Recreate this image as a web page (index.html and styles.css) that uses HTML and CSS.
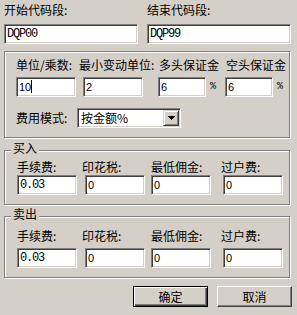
FILE: index.html
```html
<!DOCTYPE html>
<html lang="zh-CN">
<head>
<meta charset="utf-8">
<title>费用设置</title>
<link rel="stylesheet" href="styles.css">
</head>
<body>
<div class="dlg">
  <div class="top">
    <div class="fld f1">
      <div class="lbl">开始代码段:</div>
      <div class="edit mono">DQP00</div>
    </div>
    <div class="fld f2">
      <div class="lbl">结束代码段:</div>
      <div class="edit mono">DQP99</div>
    </div>
  </div>

  <div class="grp g1">
    <div class="lrow">
      <span>单位/乘数:</span><span>最小变动单位:</span><span>多头保证金</span><span>空头保证金</span>
    </div>
    <div class="irow">
      <div class="edit sans w60">10<span class="caret"></span></div>
      <div class="edit sans w60 m7">2</div>
      <div class="edit sans w48 m15">6</div><span class="pct">%</span>
      <div class="edit sans w48">6</div><span class="pct">%</span>
    </div>
    <div class="srow">
      <span class="slbl">费用模式:</span>
      <div class="combo">
        <span class="ctext">按金额%</span>
        <span class="cbtn"><svg width="7" height="4" viewBox="0 0 7 4" shape-rendering="crispEdges"><path d="M0 0h7v1h-1v1h-1v1h-1v1h-1v-1h-1v-1h-1v-1h-1z" fill="#000"/></svg></span>
      </div>
    </div>
  </div>

  <div class="grp g2">
    <div class="legend">买入</div>
    <div class="lrow">
      <span>手续费:</span><span>印花税:</span><span>最低佣金:</span><span>过户费:</span>
    </div>
    <div class="irow">
      <div class="edit mono w60">0.03</div>
      <div class="edit sans w60 m8">0</div>
      <div class="edit sans w60 m6">0</div>
      <div class="edit sans w60 m12">0</div>
    </div>
  </div>

  <div class="grp g3">
    <div class="legend">卖出</div>
    <div class="lrow">
      <span>手续费:</span><span>印花税:</span><span>最低佣金:</span><span>过户费:</span>
    </div>
    <div class="irow">
      <div class="edit mono w60">0.03</div>
      <div class="edit sans w60 m8">0</div>
      <div class="edit sans w60 m6">0</div>
      <div class="edit sans w60 m12">0</div>
    </div>
  </div>

  <div class="btns">
    <div class="btn def">确定</div>
    <div class="btn">取消</div>
  </div>
</div>
</body>
</html>
```

FILE: styles.css
```css
html, body {
  margin: 0;
  background: #d4d0c8;
}
body {
  font: 12px/14px "Noto Sans CJK SC", "Liberation Sans", sans-serif;
  color: #000;
}
.dlg {
  box-sizing: border-box;
  width: 297px;
  height: 315px;
  padding: 3px 0 0 4px;
  overflow: hidden;
}
.top {
  display: flex;
}
.f1 { width: 134px; }
.f2 { width: 144px; margin-left: 9px; }
.lbl {
  height: 14px;
  white-space: nowrap;
}
.fld .edit { margin-top: 7px; }

.edit {
  box-sizing: border-box;
  height: 20px;
  background: #fff;
  border: 1px solid;
  border-color: #808080 #fff #fff #808080;
  box-shadow: inset 1px 1px 0 #404040, inset -1px -1px 0 #d4d0c8;
  padding-left: 2px;
  line-height: 18px;
  white-space: nowrap;
  overflow: hidden;
  flex: none;
}
.mono {
  font-family: "Liberation Mono", monospace;
  font-size: 12px;
  letter-spacing: -1.2px;
}
.sans {
  font-family: "Liberation Sans", sans-serif;
  font-size: 11px;
}
.caret {
  display: inline-block;
  width: 1px;
  height: 13px;
  background: #000;
  vertical-align: -2px;
}
.w60 { width: 60px; }
.w48 { width: 48px; }
.m6 { margin-left: 6px; }
.m7 { margin-left: 7px; }
.m8 { margin-left: 8px; }
.m12 { margin-left: 12px; }
.m15 { margin-left: 15px; }
.pct {
  margin-left: 4px;
  width: 15px;
  font-family: "Liberation Mono", monospace;
  font-size: 10px;
  flex: none;
}

.grp {
  box-sizing: border-box;
  width: 286px;
  border: 1px solid #808080;
  box-shadow: inset 1px 1px 0 #fff, 1px 1px 0 #fff;
}
.lrow {
  display: grid;
  white-space: nowrap;
  line-height: 14px;
}
.irow {
  display: flex;
  align-items: center;
}
.legend {
  width: fit-content;
  margin: -9px 0 0 6px;
  padding: 0 2px;
  height: 12px;
  line-height: 12px;
  background: #d4d0c8;
}

.g1 { margin-top: 7px; height: 87px; }
.g1 .lrow {
  margin-top: 6px;
  padding-left: 11px;
  grid-template-columns: 63px 80px 67px auto;
}
.g1 .irow { margin-top: 5px; padding-left: 11px; }
.srow {
  display: flex;
  align-items: center;
  margin-top: 11px;
  padding-left: 11px;
}
.slbl { width: 61px; white-space: nowrap; }
.combo {
  box-sizing: border-box;
  width: 104px;
  height: 20px;
  background: #fff;
  border: 1px solid;
  border-color: #808080 #fff #fff #808080;
  box-shadow: inset 1px 1px 0 #404040, inset -1px -1px 0 #d4d0c8;
  padding: 1px;
  display: flex;
}
.ctext {
  flex: 1;
  padding-left: 2px;
  line-height: 16px;
}
.cbtn {
  box-sizing: border-box;
  width: 16px;
  height: 16px;
  background: #d4d0c8;
  border: 1px solid;
  border-color: #d4d0c8 #404040 #404040 #d4d0c8;
  box-shadow: inset 1px 1px 0 #fff, inset -1px -1px 0 #808080;
  display: flex;
  align-items: center;
  justify-content: center;
}
.cbtn svg { display: block; }

.g2 { margin-top: 12px; height: 55px; }
.g2 .lrow, .g3 .lrow {
  padding-left: 12px;
  grid-template-columns: 65px 69px 70px auto;
}
.g2 .irow, .g3 .irow { padding-left: 12px; }
.g2 .lrow { margin-top: 6px; }
.g2 .irow { margin-top: 1px; }

.g3 { margin-top: 11px; height: 62px; }
.g3 .lrow { margin-top: 9px; }
.g3 .irow { margin-top: 5px; }

.btns {
  display: flex;
  justify-content: flex-end;
  margin-top: 8px;
  padding-right: 5px;
}
.btn {
  box-sizing: border-box;
  width: 75px;
  height: 21px;
  border: 1px solid;
  border-color: #fff #404040 #404040 #fff;
  box-shadow: inset -1px -1px 0 #808080, inset 1px 1px 0 #d4d0c8;
  text-align: center;
  line-height: 19px;
}
.btn + .btn { margin-left: 9px; }
.btn.def {
  border-color: #000;
  box-shadow: inset 1px 1px 0 #fff, inset -1px -1px 0 #404040, inset -2px -2px 0 #808080;
}
```
